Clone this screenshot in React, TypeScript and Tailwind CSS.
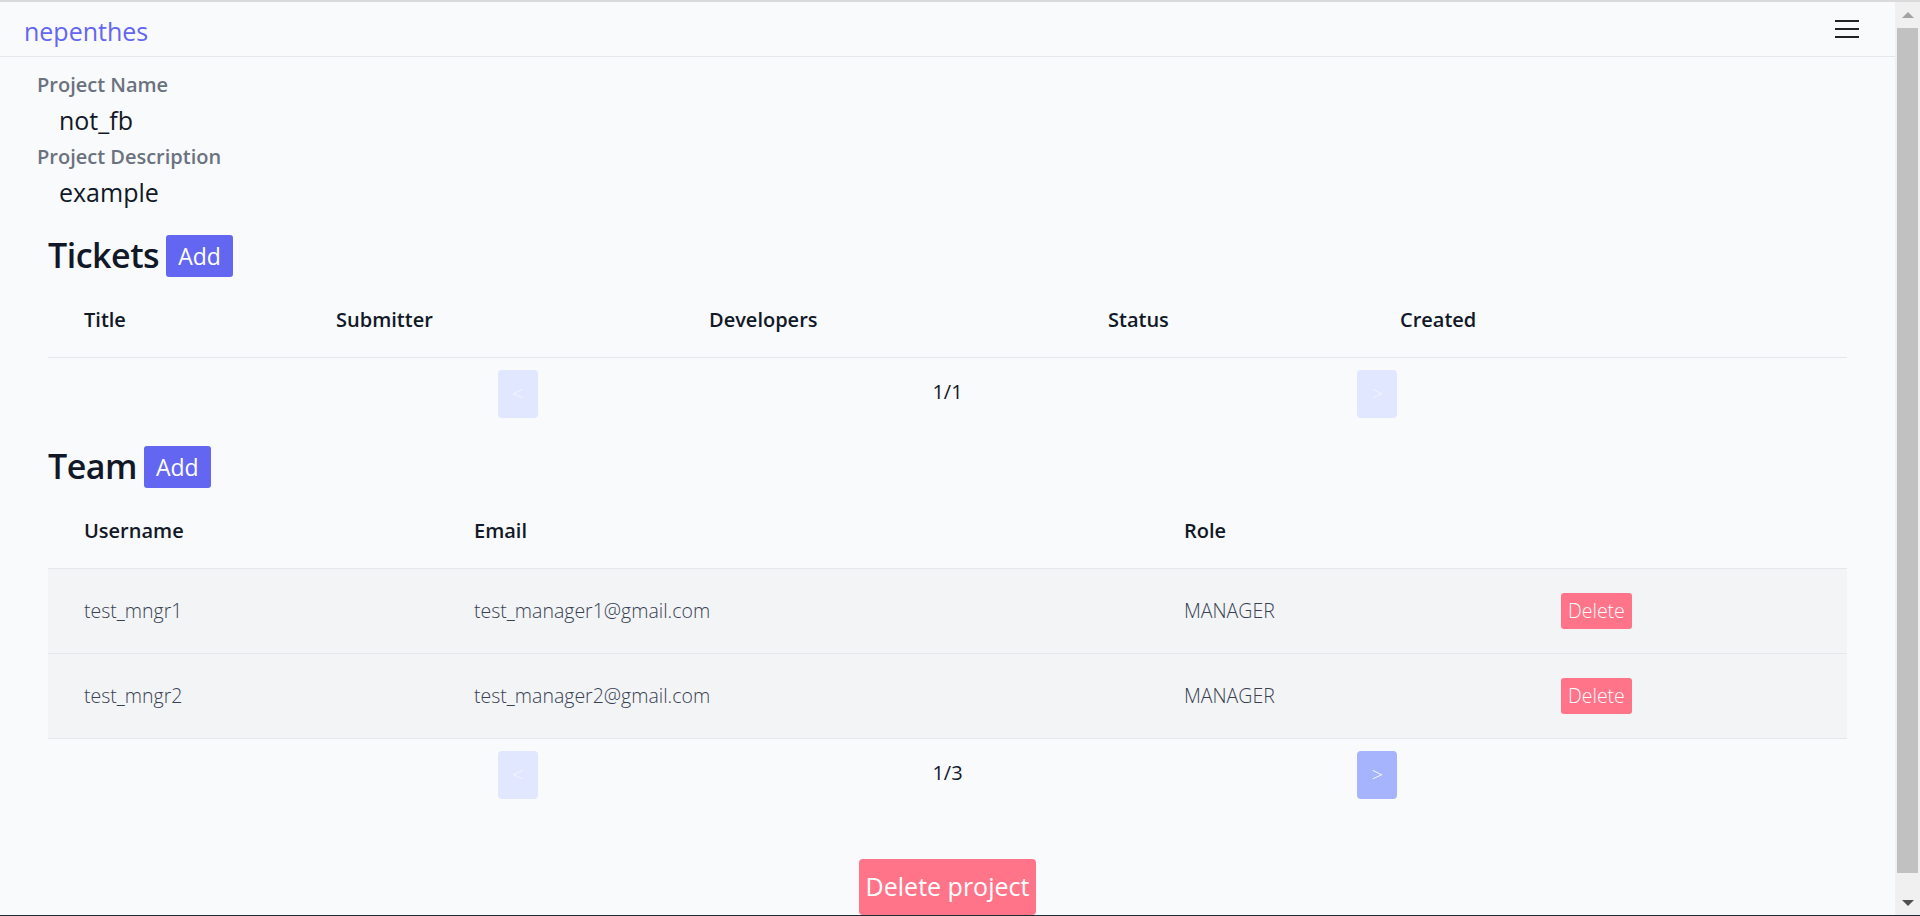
const tickets = { cols: ['Title', 'Submitter', 'Developers', 'Status', 'Created'] };

const team = [
    { username: 'test_mngr1', email: 'test_manager1@gmail.com', role: 'MANAGER' },
    { username: 'test_mngr2', email: 'test_manager2@gmail.com', role: 'MANAGER' },
];

function Pager({ page, canNext }: { page: string; canNext: boolean }) {
    return (
        <div className="w-1/2 mx-auto mt-[12px] flex items-center justify-between">
            <button className="w-[40px] h-[48px] rounded-[4px] bg-[#e0e7ff] text-[#f5f7ff] text-[20px] font-light">
                &lt;
            </button>
            <span className="text-[20px] text-[#111827] pb-[4px]">{page}</span>
            <button
                className={`w-[40px] h-[48px] rounded-[4px] text-[20px] font-light ${canNext ? 'bg-[#a5b4fc] text-white' : 'bg-[#e0e7ff] text-[#f5f7ff]'
                    }`}
            >
                &gt;
            </button>
        </div>
    );
}

function Heading({ title }: { title: string }) {
    return (
        <div className="flex items-center h-[45px]">
            <h2 className="text-[34px] leading-[45px] font-semibold text-[#111827] tracking-[-0.5px]">{title}</h2>
            <button className="ml-[7px] h-[42px] px-[12px] rounded-[3px] bg-[#6366f1] text-white text-[23px] leading-[42px]">
                Add
            </button>
        </div>
    );
}

export default function App() {
    return (
        <div
            className="h-[916px] flex flex-col overflow-hidden bg-[#f9fafb]"
            style={{ fontFamily: '"Open Sans", "Noto Sans", sans-serif' }}
        >
            <div className="h-[2px] bg-[#dadada]" />

            <div className="flex-1 flex min-h-0">
                <main className="flex-1 min-w-0 overflow-hidden">
                    {/* Navbar */}
                    <nav className="h-[55px] border-b border-[#e5e7eb] flex items-center justify-between pl-[24px] pr-[36px]">
                        <a className="text-[25px] text-[#6366f1] leading-none pt-[4px]">nepenthes</a>
                        <button className="w-[24px] h-[18px] flex flex-col justify-between">
                            <span className="block h-[2px] bg-[#222]" />
                            <span className="block h-[2px] bg-[#222]" />
                            <span className="block h-[2px] bg-[#222]" />
                        </button>
                    </nav>

                    {/* Project info */}
                    <div className="pl-[37px] mt-[14px]">
                        <div className="text-[20px] leading-[28px] font-semibold text-[#6b7280]">Project Name</div>
                        <div className="mt-[2px] pl-[22px] text-[25px] leading-[38px] text-[#111827]">not_fb</div>
                        <div className="mt-[4px] text-[20px] leading-[28px] font-semibold text-[#6b7280]">
                            Project Description
                        </div>
                        <div className="mt-[2px] pl-[22px] text-[25px] leading-[38px] text-[#111827]">example</div>
                    </div>

                    <div className="px-12">
                        {/* Tickets */}
                        <div className="mt-[22px]">
                            <Heading title="Tickets" />
                        </div>
                        <div className="mt-1 grid grid-cols-[252px_373px_399px_292px_1fr] h-[76px] items-center border-b border-[#e5e7eb] text-[20px] font-semibold text-[#111827]">
                            {tickets.cols.map((c) => (
                                <div key={c} className="pl-[36px]">
                                    {c}
                                </div>
                            ))}
                        </div>
                        <Pager page="1/1" canNext={false} />

                        {/* Team */}
                        <div className="mt-[26px]">
                            <Heading title="Team" />
                        </div>
                        <div className="mt-1 grid grid-cols-[390px_710px_377px_1fr] h-[76px] items-center border-b border-[#e5e7eb] text-[20px] font-semibold text-[#111827]">
                            <div className="pl-[36px]">Username</div>
                            <div className="pl-[36px]">Email</div>
                            <div className="pl-[36px]">Role</div>
                            <div />
                        </div>
                        {team.map((m) => (
                            <div
                                key={m.username}
                                className="grid grid-cols-[390px_710px_377px_1fr] h-[85px] items-center border-b border-[#e5e7eb] bg-[#f3f4f6] text-[19.5px] font-light text-[#374151]"
                            >
                                <div className="pl-[36px]">{m.username}</div>
                                <div className="pl-[36px]">{m.email}</div>
                                <div className="pl-[36px]">{m.role}</div>
                                <div className="pl-[36px]">
                                    <button className="h-[36px] px-[7px] rounded-[3px] bg-[#ff7489] text-white text-[19.5px] font-light">
                                        Delete
                                    </button>
                                </div>
                            </div>
                        ))}
                        <Pager page="1/3" canNext={true} />

                        <div className="mt-[60px] flex justify-center">
                            <button className="h-[56px] px-[7px] rounded-[4px] bg-[#ff7489] text-white text-[25px]">
                                Delete project
                            </button>
                        </div>
                    </div>
                </main>

                {/* Scrollbar */}
                <div className="w-[25px] bg-[#f0f0f0] flex flex-col items-center">
                    <div className="h-[26px] flex items-center justify-center">
                        <div className="w-0 h-0 border-l-[6px] border-r-[6px] border-b-[6px] border-l-transparent border-r-transparent border-b-[#a3a3a3]" />
                    </div>
                    <div className="flex-1 w-[21px] bg-[#c1c1c1]" />
                    <div className="h-[42px] flex items-end justify-center pb-[9px]">
                        <div className="w-0 h-0 border-l-[6px] border-r-[6px] border-t-[6px] border-l-transparent border-r-transparent border-t-[#505050]" />
                    </div>
                </div>
            </div>

            <div className="h-[1px] bg-[#1f2937]" />
        </div>
    );
}
